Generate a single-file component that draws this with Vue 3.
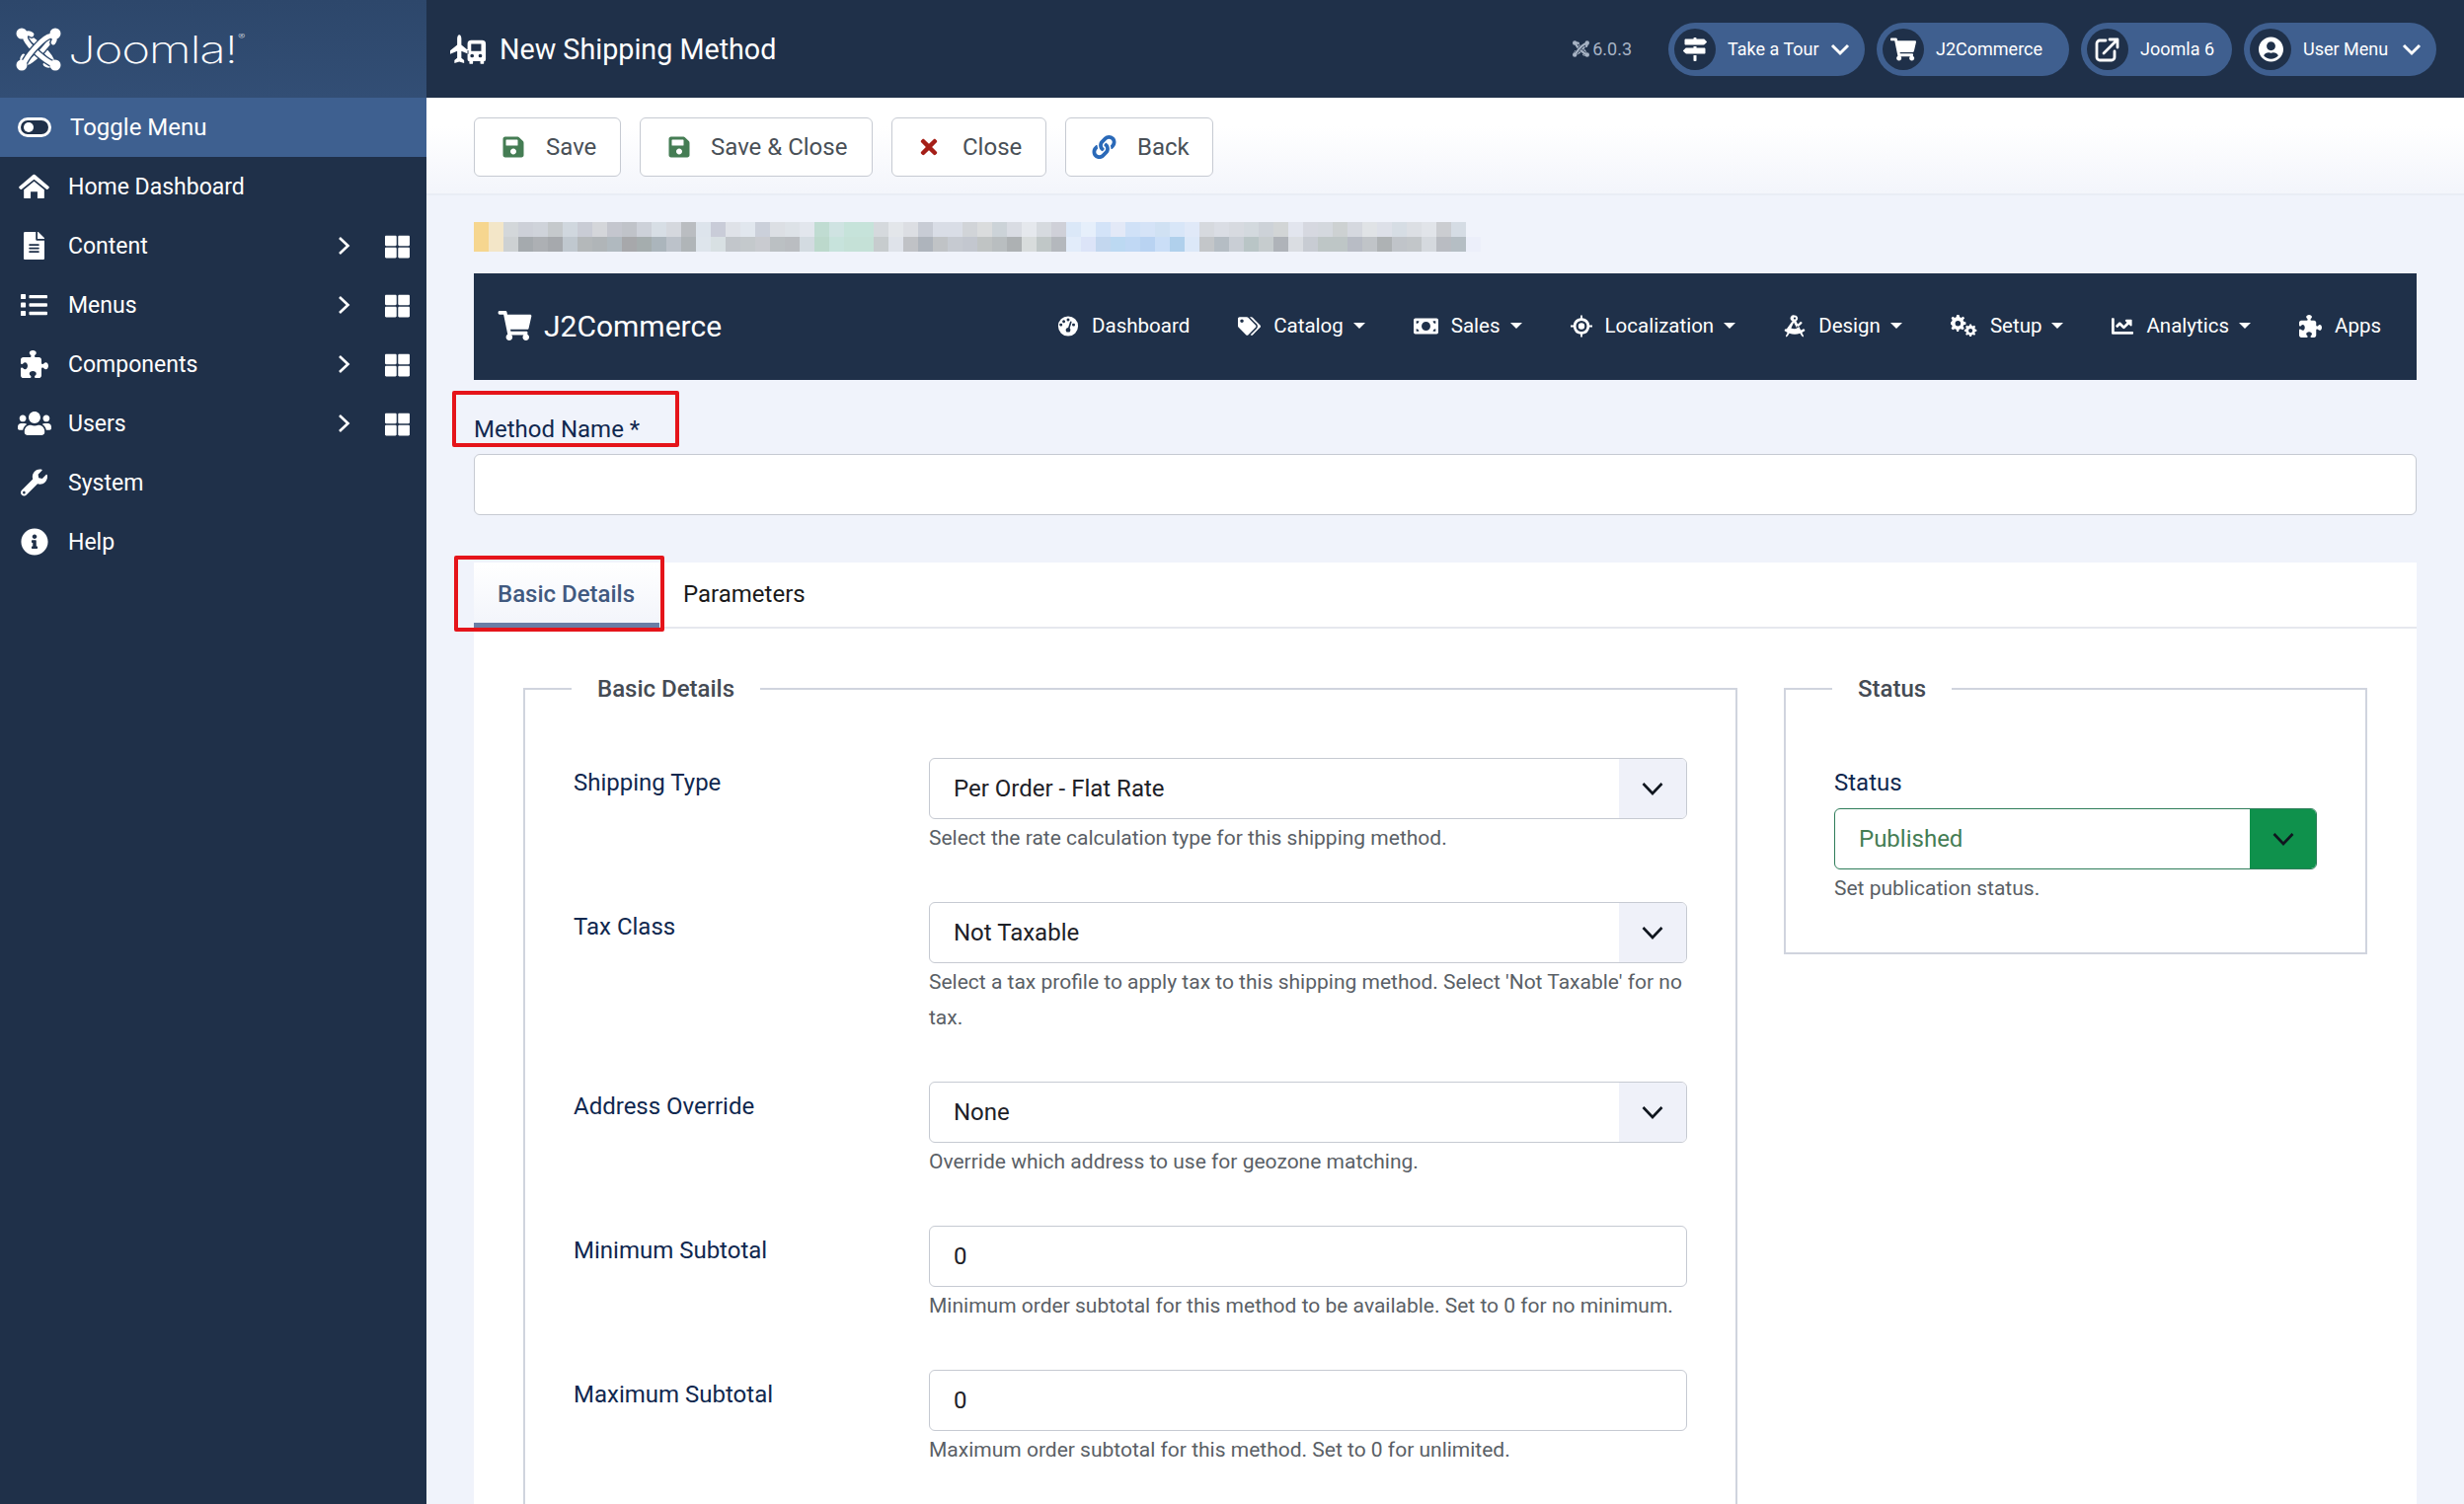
<script setup>
const fa = {
  home: ['0 0 576 512', 'M288 30a40 40 0 0 1 28 10l250 215c10 9 10 22 2 31l-16 18c-9 9-22 9-31 2L288 120 55 306c-9 7-22 7-31-2L8 286c-8-9-8-22 2-31L260 40a40 40 0 0 1 28-10zM288 160L480 315V464a16 16 0 0 1-16 16H352V352H224v128H112a16 16 0 0 1-16-16V315z'],
  file: ['0 0 384 512', 'M224 136V0H24C10.7 0 0 10.7 0 24v464c0 13.3 10.7 24 24 24h336c13.3 0 24-10.7 24-24V160H248c-13.2 0-24-10.8-24-24zm64 236c0 6.6-5.4 12-12 12H108c-6.6 0-12-5.4-12-12v-8c0-6.6 5.4-12 12-12h168c6.6 0 12 5.4 12 12v8zm0-64c0 6.6-5.4 12-12 12H108c-6.6 0-12-5.4-12-12v-8c0-6.6 5.4-12 12-12h168c6.6 0 12 5.4 12 12v8zm0-72v8c0 6.6-5.4 12-12 12H108c-6.6 0-12-5.4-12-12v-8c0-6.6 5.4-12 12-12h168c6.6 0 12 5.4 12 12zm96-114.1v6.1H256V0h6.1c6.4 0 12.5 2.5 17 7l97.9 98c4.5 4.5 7 10.6 7 16.9z'],
  list: ['0 0 512 512', 'M80 368H16a16 16 0 0 0-16 16v64a16 16 0 0 0 16 16h64a16 16 0 0 0 16-16v-64a16 16 0 0 0-16-16zm0-320H16A16 16 0 0 0 0 64v64a16 16 0 0 0 16 16h64a16 16 0 0 0 16-16V64a16 16 0 0 0-16-16zm0 160H16a16 16 0 0 0-16 16v64a16 16 0 0 0 16 16h64a16 16 0 0 0 16-16v-64a16 16 0 0 0-16-16zm416 176H176a16 16 0 0 0-16 16v32a16 16 0 0 0 16 16h320a16 16 0 0 0 16-16v-32a16 16 0 0 0-16-16zm0-320H176a16 16 0 0 0-16 16v32a16 16 0 0 0 16 16h320a16 16 0 0 0 16-16V80a16 16 0 0 0-16-16zm0 160H176a16 16 0 0 0-16 16v32a16 16 0 0 0 16 16h320a16 16 0 0 0 16-16v-32a16 16 0 0 0-16-16z'],
  puzzle: ['0 0 512 512', 'M192 104.800c0-9.200-5.800-17.300-13.200-22.800C167.200 73.300 160 61.300 160 48c0-26.500 28.700-48 64-48s64 21.500 64 48c0 13.300-7.200 25.300-18.800 34c-7.400 5.500-13.200 13.600-13.200 22.800c0 12.800 10.400 23.200 23.200 23.200H336c26.500 0 48 21.500 48 48v56.800c0 12.800 10.400 23.200 23.200 23.200c9.200 0 17.300-5.800 22.800-13.200c8.700-11.600 20.700-18.800 34-18.800c26.500 0 48 28.700 48 64s-21.500 64-48 64c-13.300 0-25.300-7.200-34-18.800c-5.500-7.400-13.600-13.200-22.800-13.200c-12.800 0-23.200 10.400-23.200 23.200V464c0 26.500-21.500 48-48 48H279.200c-12.800 0-23.200-10.400-23.200-23.200c0-9.200 5.800-17.300 13.200-22.800c11.600-8.700 18.800-20.700 18.800-34c0-26.500-28.700-48-64-48s-64 21.500-64 48c0 13.300 7.200 25.300 18.800 34c7.400 5.500 13.200 13.600 13.200 22.800c0 12.800-10.400 23.200-23.200 23.200H48c-26.500 0-48-21.500-48-48V343.200C0 330.400 10.400 320 23.200 320c9.200 0 17.300 5.800 22.800 13.200C54.700 344.800 66.700 352 80 352c26.500 0 48-28.700 48-64s-21.500-64-48-64c-13.300 0-25.300 7.200-34 18.800C40.500 250.200 32.400 256 23.200 256C10.400 256 0 245.600 0 232.800V176c0-26.500 21.500-48 48-48H168.800c12.800 0 23.200-10.400 23.200-23.200z'],
  users: ['0 0 640 512', 'M96 224c35.3 0 64-28.7 64-64s-28.7-64-64-64-64 28.7-64 64 28.7 64 64 64zm448 0c35.3 0 64-28.7 64-64s-28.7-64-64-64-64 28.7-64 64 28.7 64 64 64zm32 32h-64c-17.6 0-33.5 7.1-45.1 18.6 40.3 22.1 68.9 62 75.1 109.4h66c17.7 0 32-14.3 32-32v-32c0-35.3-28.7-64-64-64zm-256 0c61.9 0 112-50.1 112-112S381.9 32 320 32 208 82.1 208 144s50.1 112 112 112zm76.8 32h-8.3c-20.8 10-43.9 16-68.5 16s-47.6-6-68.5-16h-8.3C179.6 288 128 339.6 128 403.2V432c0 26.5 21.5 48 48 48h288c26.5 0 48-21.5 48-48v-28.8c0-63.6-51.6-115.2-115.2-115.2zm-223.7-13.4C161.5 263.1 145.6 256 128 256H64c-35.3 0-64 28.7-64 64v32c0 17.7 14.3 32 32 32h65.9c6.3-47.4 34.9-87.3 75.2-109.4z'],
  wrench: ['0 0 512 512', 'M507.73 109.1c-2.24-9.03-13.54-12.09-20.12-5.51l-74.36 74.36-67.88-11.31-11.31-67.88 74.36-74.36c6.62-6.62 3.43-17.9-5.66-20.16-47.38-11.74-99.55.91-136.58 37.93-39.64 39.64-50.55 97.1-34.05 147.2L18.74 402.76c-24.99 24.99-24.99 65.51 0 90.5 24.99 24.99 65.51 24.99 90.5 0l213.21-213.21c50.12 16.71 107.47 5.68 147.37-34.22 37.07-37.07 49.7-89.32 37.91-136.73zM64 472c-13.25 0-24-10.75-24-24 0-13.26 10.75-24 24-24s24 10.74 24 24c0 13.25-10.75 24-24 24z'],
  info: ['0 0 512 512', 'M256 8C119.043 8 8 119.083 8 256c0 136.997 111.043 248 248 248s248-111.003 248-248C504 119.083 392.957 8 256 8zm0 110c23.196 0 42 18.804 42 42s-18.804 42-42 42-42-18.804-42-42 18.804-42 42-42zm56 254c0 6.627-5.373 12-12 12h-88c-6.627 0-12-5.373-12-12v-24c0-6.627 5.373-12 12-12h12v-64h-12c-6.627 0-12-5.373-12-12v-24c0-6.627 5.373-12 12-12h64c6.627 0 12 5.373 12 12v100h12c6.627 0 12 5.373 12 12v24z'],
  grid: ['0 0 512 512', 'M296 32h192c13.255 0 24 10.745 24 24v160c0 13.255-10.745 24-24 24H296c-13.255 0-24-10.745-24-24V56c0-13.255 10.745-24 24-24zm-80 0H24C10.745 32 0 42.745 0 56v160c0 13.255 10.745 24 24 24h192c13.255 0 24-10.745 24-24V56c0-13.255-10.745-24-24-24zM0 296v160c0 13.255 10.745 24 24 24h192c13.255 0 24-10.745 24-24V296c0-13.255-10.745-24-24-24H24c-13.255 0-24 10.745-24 24zm296 184h192c13.255 0 24-10.745 24-24V296c0-13.255-10.745-24-24-24H296c-13.255 0-24 10.745-24 24v160c0 13.255 10.745 24 24 24z'],
  cart: ['0 0 576 512', 'M528.12 301.319l47.273-208C578.806 78.301 567.391 64 551.99 64H159.208l-9.166-44.81C147.758 8.021 137.93 0 126.529 0H24C10.745 0 0 10.745 0 24v16c0 13.255 10.745 24 24 24h69.883l70.248 343.435C147.325 417.1 136 435.222 136 456c0 30.928 25.072 56 56 56s56-25.072 56-56c0-15.674-6.447-29.835-16.824-40h209.647C430.447 426.165 424 440.326 424 456c0 30.928 25.072 56 56 56s56-25.072 56-56c0-22.172-12.888-41.332-31.579-50.405l5.517-24.276c3.413-15.018-8.002-29.319-23.403-29.319H218.117l-6.545-32h293.145c11.206 0 20.92-7.754 23.403-18.681z'],
  save: ['0 0 448 512', 'M433.941 129.941l-83.882-83.882A48 48 0 0 0 316.118 32H48C21.49 32 0 53.49 0 80v352c0 26.51 21.49 48 48 48h352c26.51 0 48-21.49 48-48V163.882a48 48 0 0 0-14.059-33.941zM224 416c-35.346 0-64-28.654-64-64 0-35.346 28.654-64 64-64s64 28.654 64 64c0 35.346-28.654 64-64 64zm96-304.52V212c0 6.627-5.373 12-12 12H76c-6.627 0-12-5.373-12-12V108c0-6.627 5.373-12 12-12h228.52c3.183 0 6.235 1.264 8.485 3.515l3.48 3.48A11.996 11.996 0 0 1 320 111.48z'],
  times: ['0 0 352 512', 'M242.72 256l100.07-100.07c12.28-12.28 12.28-32.19 0-44.48l-22.24-22.24c-12.28-12.28-32.19-12.28-44.48 0L176 189.28 75.93 89.21c-12.28-12.28-32.19-12.28-44.48 0L9.21 111.45c-12.28 12.28-12.28 32.19 0 44.48L109.28 256 9.21 356.07c-12.28 12.28-12.28 32.19 0 44.48l22.24 22.24c12.28 12.28 32.2 12.28 44.48 0L176 322.72l100.07 100.07c12.28 12.28 32.2 12.28 44.48 0l22.24-22.24c12.28-12.28 12.28-32.19 0-44.48L242.72 256z'],
  link: ['0 0 512 512', 'M326.612 185.391c59.747 59.809 58.927 155.698.36 214.59-.11.12-.24.25-.36.37l-67.2 67.2c-59.27 59.27-155.699 59.262-214.96 0-59.27-59.26-59.27-155.7 0-214.96l37.106-37.106c9.84-9.84 26.786-3.3 27.294 10.606.648 17.722 3.826 35.527 9.69 52.721 1.986 5.822.567 12.262-3.783 16.612l-13.087 13.087c-28.026 28.026-28.905 73.66-1.155 101.96 28.024 28.579 74.086 28.749 102.325.51l67.2-67.19c28.191-28.191 28.073-73.757 0-101.83-3.701-3.694-7.429-6.564-10.341-8.569a16.037 16.037 0 0 1-6.947-12.606c-.396-10.567 3.348-21.456 11.698-29.806l21.054-21.055c5.521-5.521 14.182-6.199 20.584-1.731a152.482 152.482 0 0 1 20.522 17.197zM467.547 44.449c-59.261-59.262-155.69-59.27-214.96 0l-67.2 67.2c-.12.12-.25.25-.36.37-58.566 58.892-59.387 154.781.36 214.59a152.454 152.454 0 0 0 20.521 17.196c6.402 4.468 15.064 3.789 20.584-1.731l21.054-21.055c8.35-8.35 12.094-19.239 11.698-29.806a16.037 16.037 0 0 0-6.947-12.606c-2.912-2.005-6.64-4.875-10.341-8.569-28.073-28.073-28.191-73.639 0-101.83l67.2-67.19c28.239-28.239 74.3-28.069 102.325.51 27.75 28.3 26.872 73.934-1.155 101.96l-13.087 13.087c-4.35 4.35-5.769 10.79-3.783 16.612 5.864 17.194 9.042 34.999 9.69 52.721.509 13.906 17.454 20.446 27.294 10.606l37.106-37.106c59.271-59.259 59.271-155.699.001-214.959z'],
  user: ['0 0 496 512', 'M248 8C111 8 0 119 0 256s111 248 248 248 248-111 248-248S385 8 248 8zm0 96c48.6 0 88 39.4 88 88s-39.4 88-88 88-88-39.4-88-88 39.4-88 88-88zm0 344c-58.7 0-111.3-26.6-146.5-68.2 18.8-35.4 55.6-59.8 98.5-59.8 2.4 0 4.8.4 7.1 1.1 13 4.2 26.6 6.9 40.9 6.9 14.3 0 28-2.7 40.9-6.9 2.3-.7 4.7-1.1 7.1-1.1 42.9 0 79.7 24.4 98.5 59.8C359.3 421.4 306.7 448 248 448z'],
  signs: ['0 0 512 512', 'M507.31 84.69L464 41.37c-6-6-14.14-9.37-22.63-9.37H288V16c0-8.84-7.16-16-16-16h-32c-8.84 0-16 7.16-16 16v16H56c-13.25 0-24 10.75-24 24v80c0 13.25 10.75 24 24 24h385.37c8.49 0 16.62-3.37 22.63-9.37l43.31-43.31c6.25-6.26 6.25-16.38 0-22.63zM224 496c0 8.84 7.16 16 16 16h32c8.84 0 16-7.16 16-16V384h-64v112zm232-272H288v-32h-64v32H70.63c-8.49 0-16.62 3.37-22.63 9.37L4.69 276.69c-6.25 6.25-6.25 16.38 0 22.63L48 342.63c6 6 14.14 9.37 22.63 9.37H456c13.25 0 24-10.75 24-24v-80c0-13.25-10.75-24-24-24z'],
  chart: ['0 0 512 512', 'M496 384H64V80c0-8.84-7.16-16-16-16H16C7.16 64 0 71.16 0 80v336c0 17.67 14.33 32 32 32h464c8.84 0 16-7.16 16-16v-32c0-8.84-7.16-16-16-16zM464 96H345.94c-21.38 0-32.09 25.85-16.97 40.97l32.4 32.4L288 242.75l-73.37-73.37c-12.5-12.5-32.76-12.5-45.25 0l-68.69 68.69c-6.25 6.25-6.25 16.38 0 22.63l22.62 22.62c6.25 6.25 16.38 6.25 22.63 0L192 237.25l73.37 73.37c12.5 12.5 32.76 12.5 45.25 0l96-96 32.4 32.4c15.12 15.12 40.97 4.41 40.97-16.97V112c.01-8.84-7.15-16-15.99-16z'],
  tags: ['0 0 640 512', 'M497.941 225.941L286.059 14.059A48 48 0 0 0 252.118 0H48C21.49 0 0 21.49 0 48v204.118a48 48 0 0 0 14.059 33.941l211.882 211.882c18.744 18.745 49.136 18.746 67.882 0l204.118-204.118c18.745-18.745 18.745-49.137 0-67.882zM112 160c-26.51 0-48-21.49-48-48s21.49-48 48-48 48 21.49 48 48-21.49 48-48 48zm513.941 133.823L421.823 497.941c-18.745 18.745-49.137 18.745-67.882 0l-.36-.36L527.64 323.522c16.999-16.999 26.36-39.6 26.36-63.64s-9.362-46.641-26.36-63.64L331.397 0h48.721a48 48 0 0 1 33.941 14.059l211.882 211.882c18.745 18.745 18.745 49.137 0 67.882z'],
  gauge: ['0 0 24 24', 'M12 1a11 11 0 1 0 0 22 11 11 0 0 0 0-22zM5.600 10.500a1.600 1.600 0 1 1 0-.01zM8.800 6.900a1.600 1.600 0 1 1 0-.01zM13.600 5a1.600 1.600 0 1 1 0-.01zM19.600 10.500a1.600 1.600 0 1 1 0-.01zM15.900 7.700l-2.100 6.600a2.600 2.600 0 0 1 .8 1.900c0 1.100-.4 1.800-1 2.400h-3.200c-.6-.6-1-1.300-1-2.400 0-1.500 1.200-2.600 2.700-2.600l2.100-6.500a.9.9 0 0 1 1.700.6z'],
  money: ['0 0 28 20', 'M2 1h24a2 2 0 0 1 2 2v14a2 2 0 0 1-2 2H2a2 2 0 0 1-2-2V3a2 2 0 0 1 2-2zM14 5a5 5 0 1 0 0 10 5 5 0 0 0 0-10zM3 4v3a3 3 0 0 0 3-3zM25 4h-3a3 3 0 0 0 3 3zM3 16h3a3 3 0 0 0-3-3zM25 16v-3a3 3 0 0 0-3 3z'],
  locate: ['0 0 24 24', 'M11 0h2v3.100a9 9 0 0 1 7.900 7.900H24v2h-3.100a9 9 0 0 1-7.900 7.900V24h-2v-3.100A9 9 0 0 1 3.100 13H0v-2h3.100A9 9 0 0 1 11 3.100zM12 6a6 6 0 1 0 0 12 6 6 0 0 0 0-12zM12 8.500a3.500 3.500 0 1 1 0 7 3.500 3.500 0 0 1 0-7z'],
  compass: ['0 0 24 24', 'M12 0a3.400 3.400 0 0 1 1.600 6.400l1.700 3.400a8 8 0 0 0 3.200-3l2 1.300a10.600 10.600 0 0 1-4 3.800l2.200 4.400c1.200-.4 2.300-1 3.300-1.700L23.500 17a14 14 0 0 1-3.500 2l1.800 3.600-.2 1.400-1.800-1-1.900-3.200a15 15 0 0 1-11.800 0L4.200 23l-1.800 1-.2-1.400L4 19a14 14 0 0 1-3.500-2L2 14.600l1 .6 6.400-8.800A3.400 3.400 0 0 1 12 0zM12 2.200a1.200 1.200 0 1 0 0 2.400 1.200 1.200 0 0 0 0-2.400zM11 8l-3 6.200a9 9 0 0 0 4 .8l2.400-.5-1.800-3.600zM14 12.400l.9 1.900 1.300-.6-.9-1.900z'],
  cogs: ['0 0 28 24', 'M8.800 0l.6 2.300 1.600.7 2.100-1.200 1.600 1.600L13 5.500l.7 1.600 2.300.6v2.400l-2.300.6-.7 1.600 1.200 2.100-1.600 1.600-2.100-1.200-1.600.7-.6 2.300H6.400l-.6-2.300-1.600-.7-2.100 1.200L.5 14.400l1.200-2.100L1 10.700 0 10.100V7.700l1-.6.7-1.600L.5 3.400l1.600-1.600 2.100 1.200 1.600-.7L6.400 0zM7.600 6.200a2.900 2.900 0 1 0 0 5.800 2.900 2.900 0 0 0 0-5.800z'],
  cogs2: ['0 0 28 24', 'M21.800 10l.4 1.600 1.300.5 1.400-.8 1.200 1.200-.8 1.400.5 1.300 1.600.4v1.800l-1.600.4-.5 1.300.8 1.400-1.200 1.200-1.400-.8-1.300.5-.4 1.600H20l-.4-1.600-1.300-.5-1.400.8-1.200-1.200.8-1.400-.5-1.300-1.600-.4v-1.800l1.600-.4.5-1.300-.8-1.400 1.200-1.200 1.400.8 1.300-.5.4-1.600zM20.900 14.600a2.200 2.200 0 1 0 0 4.400 2.200 2.200 0 0 0 0-4.400z'],
  shipping: ['0 0 40 32', 'M10 0c1.400 0 2.300 1.900 2.300 4.500V11l7.700 6.300V21l-7.700-3v7.500l3 2.300V31L10 29.500 4.700 31v-3.200l3-2.300V18L0 21v-3.700L7.700 11V4.500C7.700 1.900 8.600 0 10 0zM22 6h13a4 4 0 0 1 4 4v17a2 2 0 0 1-2 2v2a1 1 0 0 1-1 1h-2a1 1 0 0 1-1-1v-2h-8v2a1 1 0 0 1-1 1h-2a1 1 0 0 1-1-1v-2a2 2 0 0 1-2-2V10a4 4 0 0 1 4-4zM23 10v8h11v-8zM24 21a2 2 0 1 0 0 4 2 2 0 0 0 0-4zM33 21a2 2 0 1 0 0 4 2 2 0 0 0 0-4z']
}

// the four hooks of the logo, drawn twice so that they seem to weave
const hooks = [
  'M8 8C16 11 32 25 36 33c2 5-2 8-6 5',
  'M38 8C35 16 21 32 13 36c-5 2-8-2-5-6',
  'M38 38C30 35 14 21 10 13c-2-5 2-8 6-5',
  'M8 38C11 30 25 14 33 10c5-2 8 2 5 6'
]

const side = [
  { label: 'Home Dashboard', icon: 'home', w: 31 },
  { label: 'Content', icon: 'file', w: 21, sub: true },
  { label: 'Menus', icon: 'list', w: 27, sub: true },
  { label: 'Components', icon: 'puzzle', w: 28, sub: true },
  { label: 'Users', icon: 'users', w: 34, sub: true },
  { label: 'System', icon: 'wrench', w: 27 },
  { label: 'Help', icon: 'info', w: 28 }
]

const pills = [
  { label: 'Take a Tour', icon: 'signs', caret: true, w: 199, s: 24 },
  { label: 'J2Commerce', icon: 'cart', w: 195, s: 26 },
  { label: 'Joomla 6', icon: 'ext', w: 153, s: 26 },
  { label: 'User Menu', icon: 'user', caret: true, w: 195, s: 25 }
]

const buttons = [
  { label: 'Save', icon: 'save', color: '#457d54', w: 22, gap: 22, pad: 28, width: 149 },
  { label: 'Save & Close', icon: 'save', color: '#457d54', w: 22, gap: 21, pad: 28, width: 236 },
  { label: 'Close', icon: 'times', color: '#a51f18', w: 18, gap: 25, pad: 28, width: 157 },
  { label: 'Back', icon: 'link', color: '#2a69b8', w: 29, gap: 19, pad: 24, width: 150 }
]

const navItems = [
  { label: 'Dashboard', icons: ['gauge'], w: 22 },
  { label: 'Catalog', icons: ['tags'], w: 23, caret: true },
  { label: 'Sales', icons: ['money'], w: 25, caret: true },
  { label: 'Localization', icons: ['locate'], w: 22, caret: true },
  { label: 'Design', icons: ['compass'], w: 22, caret: true },
  { label: 'Setup', icons: ['cogs', 'cogs2'], w: 27, caret: true },
  { label: 'Analytics', icons: ['chart'], w: 22, caret: true },
  { label: 'Apps', icons: ['puzzle'], w: 23 }
]

const fields = [
  { label: 'Shipping Type', value: 'Per Order - Flat Rate', select: true, help: 'Select the rate calculation type for this shipping method.' },
  { label: 'Tax Class', value: 'Not Taxable', select: true, help: "Select a tax profile to apply tax to this shipping method. Select 'Not Taxable' for no tax." },
  { label: 'Address Override', value: 'None', select: true, help: 'Override which address to use for geozone matching.' },
  { label: 'Minimum Subtotal', value: '0', help: 'Minimum order subtotal for this method to be available. Set to 0 for no minimum.' },
  { label: 'Maximum Subtotal', value: '0', help: 'Maximum order subtotal for this method. Set to 0 for unlimited.' }
]

// blurred strip above the component menu, two rows of 15px blocks
const blurTop = 'f6d68f f3e6c8 d3d7da cdd0d8 cfd3da c5c9cc d0d7de c9ccd5 d4d6da c4c6ce c0c3c9 cdd1d9 d7dee5 d5d8de babdc1 dde4ec c9ccd8 dfe2e8 e1e7ee cbd0da dcdfe4 dde2e7 e2e6ed c0dcd2 cfe3e2 c6e3da c6e3da d5d9dd e3e6ea dcdee3 c8ccd5 d9dde6 d9dde6 d1d4d8 dadcdd ccd3d8 d9dce3 e5e8ed d6dadf cfd0d8 dbe8f8 e6effb d3e3f8 e3e9f7 d0e1f7 d5e3f7 d0e1f3 d8e6f8 e0e9f8 d6d9de dadde4 d7dae0 d3d9de cdd2d8 d2d5d6 e2e5ee d6d8e0 d4d8de cdd1d2 d5d8df e0e3e6 dde0e8 d6dde4 dcdfe4 e1e4e9 cbcdd1 d5dce4 f0f3fb'.split(' ')
const blurBottom = 'f6d68f f3e6c8 cdd1d3 a5aaae adb0b4 a6a9ad c0c8cf b4b8ba b0b5b8 b0b9bf a7a8ab a5adae abb5bc bcc2ca b0b5b8 dee5ec d8e0e3 c2c6cb c4c9cc c9cbd0 bbc0c3 babdc1 d3dbe1 bcd9cc c7e3dc c5e1d7 c5e1d7 c7ccce dfe3ea c0c2c6 aeb4bc c0c3c6 c6cad1 c3c7cf c0c4c4 b9bec0 adb1b3 d8dcdc c0c7c7 b4b8bd e2ecfa dce4f8 c3d7ef bcd9f2 c0d8f4 b9d3f2 cadef7 b0d0ec dce8f8 c3c6c9 b5bdc4 c9ced5 b9c5c6 c6ccce afb3b9 dadde2 c8ccd3 bec6c6 bec6c6 b8bcc5 c0c4c8 aeb2b4 c0c4c9 c2c6c9 d5d9de b9bcc2 b5bec4 eceffa'.split(' ')
</script>

<template>
  <div class="page">
    <aside class="sidebar">
      <div class="logo">
        <svg class="logo-mark" viewBox="0 0 46 46">
          <g fill="none" stroke-linecap="round">
            <template v-for="d in hooks" :key="d">
              <path :d="d" stroke="#2e496d" stroke-width="7.500" />
              <path :d="d" stroke="#fff" stroke-width="4.800" />
            </template>
          </g>
          <g fill="#fff">
            <circle cx="6" cy="7" r="5.500" /><circle cx="40" cy="7" r="5.500" />
            <circle cx="6" cy="39" r="5.500" /><circle cx="40" cy="39" r="5.500" />
          </g>
        </svg>
        <span class="wordmark">Joomla!<sup>®</sup></span>
      </div>
      <div class="toggle">
        <svg class="toggle-icon" viewBox="0 0 34 20">
          <rect x="1.500" y="1.500" width="31" height="17" rx="8.500" fill="#1f3049" stroke="#fff" stroke-width="3" />
          <circle cx="11" cy="10" r="5" fill="#fff" />
        </svg>
        <span>Toggle Menu</span>
      </div>
      <div v-for="item in side" :key="item.label" class="side-row">
        <span class="side-icon">
          <svg :viewBox="fa[item.icon][0]" :style="{ width: item.w + 'px' }"><path :d="fa[item.icon][1]" /></svg>
        </span>
        <span class="side-label">{{ item.label }}</span>
        <template v-if="item.sub">
          <svg class="side-chevron" viewBox="0 0 13 20"><path d="M2 2l8.500 8L2 18" /></svg>
          <svg class="side-grid" :viewBox="fa.grid[0]" preserveAspectRatio="none"><path :d="fa.grid[1]" /></svg>
        </template>
      </div>
    </aside>

    <div class="main">
      <header class="topbar">
        <svg class="title-icon" :viewBox="fa.shipping[0]"><path fill-rule="evenodd" :d="fa.shipping[1]" /></svg>
        <h1 class="title">New Shipping Method</h1>
        <div class="top-right">
          <span class="version">
            <svg class="version-mark" viewBox="0 0 46 46">
              <g fill="none" stroke-linecap="round">
                <template v-for="d in hooks" :key="d">
                  <path :d="d" stroke="#1f3049" stroke-width="9" />
                  <path :d="d" stroke="#a7b3c4" stroke-width="6" />
                </template>
              </g>
              <g fill="#a7b3c4">
                <circle cx="6" cy="7" r="6" /><circle cx="40" cy="7" r="6" />
                <circle cx="6" cy="39" r="6" /><circle cx="40" cy="39" r="6" />
              </g>
            </svg>
            6.0.3
          </span>
          <div class="pills">
            <div v-for="p in pills" :key="p.label" class="pill" :style="{ width: p.w + 'px' }">
              <span class="pill-icon">
                <svg v-if="p.icon === 'ext'" viewBox="0 0 26 26" :style="{ width: p.s + 'px' }" class="ext">
                  <path d="M11 4H5a3 3 0 0 0-3 3v14a3 3 0 0 0 3 3h12a3 3 0 0 0 3-3v-6" />
                  <path d="M9 17L22 4M15 3h8v8" />
                </svg>
                <svg v-else :viewBox="fa[p.icon][0]" :style="{ width: p.s + 'px' }"><path :d="fa[p.icon][1]" /></svg>
              </span>
              <span class="pill-label">{{ p.label }}</span>
              <svg v-if="p.caret" class="pill-caret" viewBox="0 0 20 14"><path d="M2 3l8 8 8-8" /></svg>
            </div>
          </div>
        </div>
      </header>

      <div class="toolbar">
        <button
          v-for="b in buttons"
          :key="b.label"
          class="tool-btn"
          :style="{ paddingLeft: b.pad + 'px', gap: b.gap + 'px', width: b.width + 'px' }"
        >
          <svg :viewBox="fa[b.icon][0]" :style="{ width: b.w + 'px', fill: b.color }"><path :d="fa[b.icon][1]" /></svg>
          <span>{{ b.label }}</span>
        </button>
      </div>

      <div class="content">
        <div class="blur-strip">
          <span v-for="(c, i) in blurTop" :key="'t' + i" :style="{ background: '#' + c }"></span>
          <span v-for="(c, i) in blurBottom" :key="'b' + i" :style="{ background: '#' + c }"></span>
        </div>

        <nav class="comp-nav">
          <div class="brand">
            <svg :viewBox="fa.cart[0]"><path :d="fa.cart[1]" /></svg>
            <span>J2Commerce</span>
          </div>
          <ul class="nav-items">
            <li v-for="n in navItems" :key="n.label">
              <svg :viewBox="fa[n.icons[0]][0]" :style="{ width: n.w + 'px' }">
                <path v-for="ic in n.icons" :key="ic" fill-rule="evenodd" :d="fa[ic][1]" />
              </svg>
              <span class="nav-text">{{ n.label }}</span>
              <i v-if="n.caret" class="caret"></i>
            </li>
          </ul>
        </nav>

        <div class="name-field">
          <label class="name-label">Method Name *</label>
          <span class="mark mark-name"></span>
          <div class="name-input"></div>
        </div>

        <section class="card">
          <div class="tabs">
            <div class="tab active">Basic Details</div>
            <div class="tab">Parameters</div>
            <span class="mark mark-tab"></span>
          </div>
          <div class="columns">
            <fieldset class="box">
              <legend>Basic Details</legend>
              <div v-for="f in fields" :key="f.label" class="row">
                <label>{{ f.label }}</label>
                <div class="control">
                  <div class="input">
                    <span class="value">{{ f.value }}</span>
                    <span v-if="f.select" class="arrow">
                      <svg viewBox="0 0 24 16"><path d="M2.500 3l9.500 10 9.500-10" /></svg>
                    </span>
                  </div>
                  <p class="help">{{ f.help }}</p>
                </div>
              </div>
            </fieldset>
            <fieldset class="box">
              <legend>Status</legend>
              <div class="stacked">
                <label>Status</label>
                <div class="input published">
                  <span class="value">Published</span>
                  <span class="arrow">
                    <svg viewBox="0 0 24 16"><path d="M2.500 3l9.500 10 9.500-10" /></svg>
                  </span>
                </div>
                <p class="help">Set publication status.</p>
              </div>
            </fieldset>
          </div>
        </section>
      </div>
    </div>
  </div>
</template>

<style>
html, body { margin: 0; background: #f0f3fb; }
</style>

<style scoped>
.page {
  display: flex;
  height: 1524px;
  overflow: hidden;
  font-family: Roboto, 'Liberation Sans', sans-serif;
  font-size: 24px;
  background: #f0f3fb;
}

/* sidebar */
.sidebar {
  width: 432px;
  flex: none;
  background: #1f3049;
  color: #fff;
}
.logo {
  height: 99px;
  box-sizing: border-box;
  display: flex;
  align-items: center;
  padding-left: 16px;
  background: linear-gradient(180deg, #2d476b, #324e75);
}
.logo-mark { width: 46px; height: 46px; flex: none; }
.wordmark {
  margin-left: 7px;
  font-family: Inter, sans-serif;
  font-weight: 200;
  font-size: 38px;
  letter-spacing: -1px;
  line-height: 1;
  position: relative;
  transform: scaleX(1.3);
  transform-origin: left center;
}
.wordmark sup { font-size: 8px; position: absolute; top: 2px; margin-left: 1px; }
.toggle {
  height: 60px;
  display: flex;
  align-items: center;
  padding-left: 18px;
  background: #3e6090;
}
.toggle-icon { width: 34px; height: 20px; margin-right: 19px; }
.side-row {
  height: 60px;
  display: flex;
  align-items: center;
  font-size: 23px;
}
.side-icon {
  width: 69px;
  flex: none;
  display: flex;
  justify-content: center;
  box-sizing: border-box;
}
.side-icon svg { fill: #fff; display: block; height: 28px; }
.side-label { flex: 1; }
.side-chevron {
  width: 13px;
  height: 20px;
  fill: none;
  stroke: #fff;
  stroke-width: 2.600;
  margin-right: 34px;
}
.side-grid { width: 25px; height: 26px; fill: #fff; margin: 2px 17px 0 1px; }

/* top bar */
.main { flex: 1; min-width: 0; display: flex; flex-direction: column; }
.topbar {
  height: 99px;
  flex: none;
  display: flex;
  align-items: center;
  background: #1f3049;
  color: #fff;
  padding: 0 28px 0 24px;
}
.title-icon { width: 37px; height: 30px; fill: #fff; margin-right: 13px; }
.title { margin: 0; font-size: 28.700px; font-weight: 400; }
.top-right { margin-left: auto; display: flex; align-items: center; }
.version {
  display: flex;
  align-items: center;
  gap: 3px;
  font-size: 18px;
  color: #a7b3c4;
  margin-right: 37px;
}
.version-mark { width: 17px; height: 17px; }
.pills { display: flex; gap: 12px; }
.pill {
  height: 54px;
  box-sizing: border-box;
  display: flex;
  align-items: center;
  padding-left: 6px;
  background: #3f5f8f;
  border-radius: 27px;
  font-size: 18px;
}
.pill-icon {
  width: 42px;
  height: 42px;
  flex: none;
  border-radius: 50%;
  background: #1f3049;
  display: flex;
  align-items: center;
  justify-content: center;
  margin-right: 12px;
}
.pill-icon svg { fill: #fff; display: block; height: 26px; }
.pill-icon svg.ext { fill: none; stroke: #fff; stroke-width: 2.800; stroke-linecap: round; stroke-linejoin: round; }
.pill-label { white-space: nowrap; }
.pill-caret {
  width: 20px;
  height: 14px;
  margin-left: auto;
  margin-right: 15px;
  fill: none;
  stroke: #fff;
  stroke-width: 3;
}

/* toolbar */
.toolbar {
  height: 99px;
  flex: none;
  box-sizing: border-box;
  display: flex;
  align-items: flex-start;
  gap: 19px;
  padding: 20px 48px 0;
  background: linear-gradient(180deg, #fff 30%, #f3f5fb 100%);
  border-bottom: 2px solid #e9edf5;
}
.tool-btn {
  height: 60px;
  display: flex;
  align-items: center;
  box-sizing: border-box;
  padding: 0;
  background: #fff;
  border: 1px solid #c6cad2;
  border-radius: 6px;
  font-family: inherit;
  font-size: 24px;
  color: #495057;
}
.tool-btn svg { height: 24px; display: block; }

/* content */
.content { padding: 27px 48px 0; }
.blur-strip {
  display: grid;
  grid-template-columns: repeat(68, 15px);
  grid-auto-rows: 15px;
  height: 30px;
}
.comp-nav {
  height: 108px;
  margin-top: 22px;
  box-sizing: border-box;
  display: flex;
  align-items: center;
  justify-content: space-between;
  padding: 0 36px 2px 24px;
  background: #1f3049;
  color: #fff;
}
.brand { display: flex; align-items: center; gap: 12px; font-size: 30px; }
.brand svg { width: 35px; height: 30px; fill: #fff; }
.nav-items {
  list-style: none;
  margin: 0;
  padding: 0;
  display: flex;
  gap: 49px;
  font-size: 20.500px;
}
.nav-items li { display: flex; align-items: center; }
.nav-items svg { height: 23px; fill: #fff; margin-right: 13px; display: block; }
.caret {
  margin-left: 10px;
  border-left: 6px solid transparent;
  border-right: 6px solid transparent;
  border-top: 6px solid #fff;
}

/* method name */
.name-field { position: relative; padding-top: 32px; }
.name-label {
  display: block;
  line-height: 36px;
  color: #10284f;
  margin-bottom: 7px;
}
.name-input {
  height: 62px;
  box-sizing: border-box;
  background: #fff;
  border: 1px solid #c6cad2;
  border-radius: 6px;
}
.mark {
  position: absolute;
  box-sizing: border-box;
  border: 4px solid #e5141a;
  border-radius: 2px;
  pointer-events: none;
}
.mark-name { left: -22px; top: 11px; width: 230px; height: 57px; }
.mark-tab { left: -20px; top: -7px; width: 213px; height: 77px; }

/* tabs */
.card { margin-top: 48px; background: #fff; min-height: 900px; }
.tabs {
  position: relative;
  display: flex;
  height: 67px;
  box-sizing: border-box;
  border-bottom: 2px solid #e6e8ee;
}
.tab {
  height: 67px;
  box-sizing: border-box;
  padding: 0 24px;
  line-height: 64px;
  color: #1a1a1a;
}
.tab.active {
  width: 188px;
  background: linear-gradient(180deg, #fff, #f3f5fb);
  border-bottom: 6px solid #6a7ea6;
  color: #41597f;
  font-weight: 500;
  white-space: nowrap;
}

.columns {
  display: grid;
  grid-template-columns: 1fr 591px;
  gap: 47px;
  padding: 43px 50px 0;
  align-items: start;
}
.box {
  margin: 0;
  min-width: 0;
  padding: 52px 49px 0;
  border: 2px solid #d0d4de;
}
.box legend {
  margin-left: -2px;
  padding: 0 26px;
  line-height: 36px;
  font-weight: 500;
  color: #454b54;
}
.row {
  display: grid;
  grid-template-columns: 360px 768px;
  padding-bottom: 48px;
}
.row label { padding-top: 7px; line-height: 36px; color: #10284f; }
.input {
  position: relative;
  height: 62px;
  box-sizing: border-box;
  display: flex;
  align-items: center;
  padding-left: 24px;
  background: #fff;
  border: 1px solid #c6cad2;
  border-radius: 6px;
  overflow: hidden;
  color: #1d2127;
}
.arrow {
  position: absolute;
  top: 0;
  right: 0;
  bottom: 0;
  width: 68px;
  display: flex;
  align-items: center;
  justify-content: center;
  background: #eff1f9;
}
.arrow svg { width: 24px; height: 16px; fill: none; stroke: #10161f; stroke-width: 2.600; }
.help {
  margin: 1px 0 -1px;
  line-height: 36px;
  font-size: 21px;
  color: #5a5f66;
}
.stacked { padding-bottom: 48px; padding-top: 7px; }
.stacked label { display: block; line-height: 36px; color: #10284f; margin-bottom: 8px; }
.published { border-color: #2f7d5a; color: #457d54; }
.published .arrow { background: #0f914c; width: 67px; }
</style>
